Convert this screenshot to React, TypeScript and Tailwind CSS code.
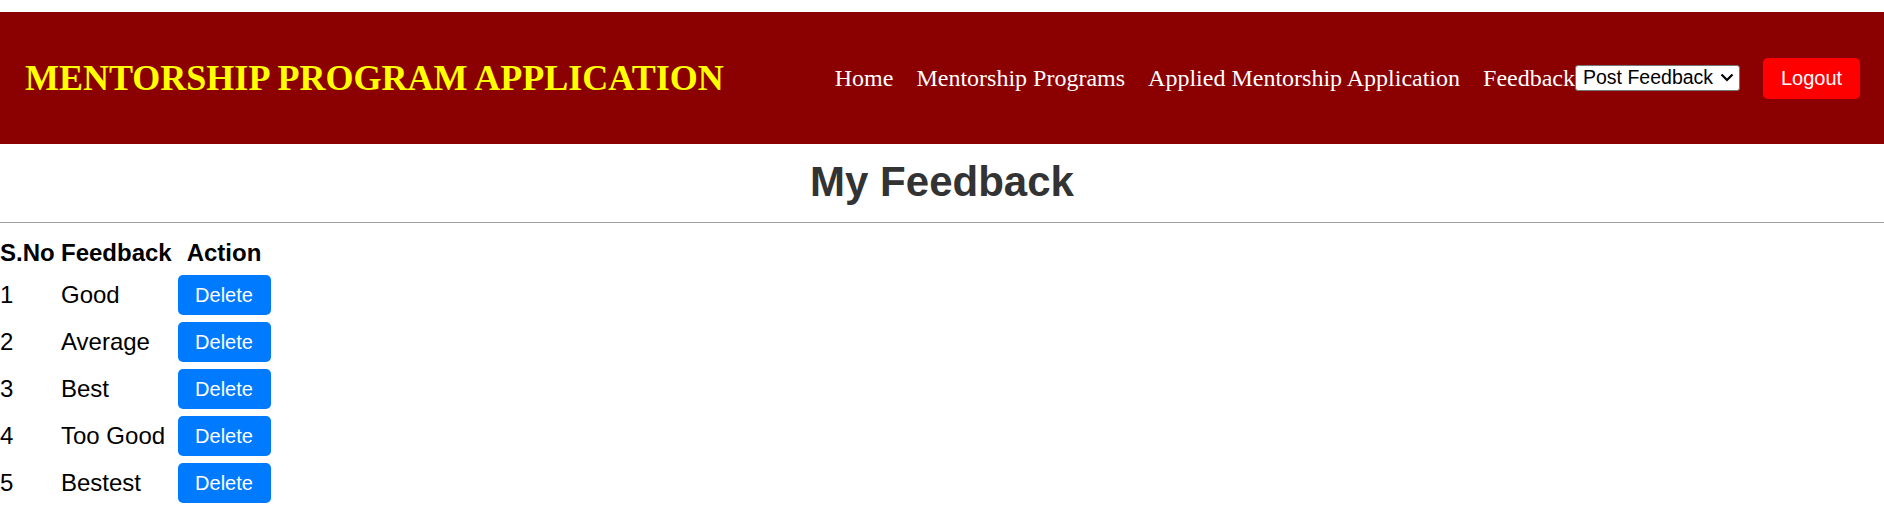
import { useState } from "react";

type FeedbackItem = { id: number; text: string };

const initialFeedback: FeedbackItem[] = [
  { id: 1, text: "Good" },
  { id: 2, text: "Average" },
  { id: 3, text: "Best" },
  { id: 4, text: "Too Good" },
  { id: 5, text: "Bestest" },
];

const serif = "font-['Liberation_Serif','Times_New_Roman',serif]";
const sans = "font-['Liberation_Sans',Arial,sans-serif]";

function Header() {
  return (
    <header className="mt-[12px] flex h-[132px] items-center justify-between bg-[#8b0000] pl-[25px] pr-[24px]">
      <h1 className={`${serif} text-[36px] font-bold text-[#ffff00]`}>
        MENTORSHIP PROGRAM APPLICATION
      </h1>
      <nav className={`${serif} flex items-center text-[24px] text-white`}>
        <a href="#" className="mr-[23px]">Home</a>
        <a href="#" className="mr-[23px]">Mentorship Programs</a>
        <a href="#" className="mr-[23px]">Applied Mentorship Application</a>
        <a href="#">Feedback</a>
        {/* native select, custom chevron */}
        <span className="relative flex">
          <select
            defaultValue="post"
            className={`${sans} h-[26px] w-[165px] appearance-none rounded-[3px] border border-[#767676] bg-white pb-[2px] pl-[7px] text-[19.5px] leading-[22px] text-black`}
          >
            <option value="post">Post Feedback</option>
            <option value="view">View Feedback</option>
          </select>
          <svg
            viewBox="0 0 14 9"
            className="pointer-events-none absolute right-[6px] top-[8px] h-[9px] w-[14px]"
          >
            <path d="M1.5 1.5 L7 7 L12.5 1.5" fill="none" stroke="#000" strokeWidth="2.2" />
          </svg>
        </span>
        <button
          className={`${sans} ml-[23px] h-[41px] w-[97px] rounded-[5px] bg-[#ff0000] text-[20px] text-white`}
        >
          Logout
        </button>
      </nav>
    </header>
  );
}

export default function App() {
  const [items, setItems] = useState(initialFeedback);

  function handleDelete(id: number) {
    setItems((prev) => prev.filter((f) => f.id !== id));
  }

  return (
    <div className={`${sans} min-h-[514px] bg-white`}>
      <Header />
      <h2 className="mt-[14px] text-center text-[42px] font-bold leading-[48px] text-[#333333]">
        My Feedback
      </h2>
      <hr className="mt-[16px] border-t border-[#a0a0a0]" />

      <table className="mt-[11px] text-[24px] text-black">
        <thead>
          <tr className="h-[37px]">
            <th className="w-[61px] text-left font-bold">S.No</th>
            <th className="w-[116px] text-left font-bold">Feedback</th>
            <th className="w-[94px] text-center font-bold">Action</th>
          </tr>
        </thead>
        <tbody>
          {items.map((f, i) => (
            <tr key={f.id} className="h-[47px]">
              <td>{i + 1}</td>
              <td>{f.text}</td>
              <td className="text-center">
                <button
                  onClick={() => handleDelete(f.id)}
                  className="h-[40px] w-[93px] rounded-[5px] bg-[#007bff] text-[20px] text-white"
                >
                  Delete
                </button>
              </td>
            </tr>
          ))}
        </tbody>
      </table>
    </div>
  );
}
